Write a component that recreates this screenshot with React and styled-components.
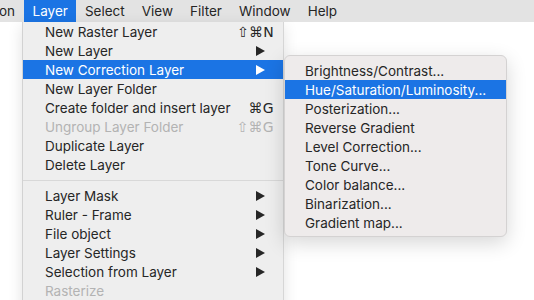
import React from "react";
import styled, { createGlobalStyle } from "styled-components";

const GlobalStyle = createGlobalStyle`
  html, body {
    margin: 0;
    background: #ffffff;
  }
  body {
    font-family: Inter, "Noto Sans", "Liberation Sans", sans-serif;
    font-size: 13.5px;
    color: #262626;
  }
`;

const mainItems = [
  { label: "New Raster Layer", shortcut: "⇧⌘N" },
  { label: "New Layer", sub: true },
  { label: "New Correction Layer", sub: true, active: true },
  { label: "New Layer Folder" },
  { label: "Create folder and insert layer", shortcut: "⌘G" },
  { label: "Ungroup Layer Folder", shortcut: "⇧⌘G", disabled: true },
  { label: "Duplicate Layer" },
  { label: "Delete Layer" },
  { separator: true },
  { label: "Layer Mask", sub: true },
  { label: "Ruler - Frame", sub: true },
  { label: "File object", sub: true },
  { label: "Layer Settings", sub: true },
  { label: "Selection from Layer", sub: true },
  { label: "Rasterize", disabled: true },
];

const correctionItems = [
  "Brightness/Contrast...",
  "Hue/Saturation/Luminosity...",
  "Posterization...",
  "Reverse Gradient",
  "Level Correction...",
  "Tone Curve...",
  "Color balance...",
  "Binarization...",
  "Gradient map...",
];

function App() {
  return (
    <Page>
      <GlobalStyle />
      <MenuBar>
        <BarItem $cut>on</BarItem>
        <BarItem $open>Layer</BarItem>
        <BarItem>Select</BarItem>
        <BarItem>View</BarItem>
        <BarItem>Filter</BarItem>
        <BarItem>Window</BarItem>
        <BarItem>Help</BarItem>
      </MenuBar>
      <Dropdown>
        {mainItems.map((item, index) => {
          if (item.separator) {
            return <Separator key={index} />;
          }
          return (
            <Row key={index} $active={item.active} $disabled={item.disabled}>
              <Label>{item.label}</Label>
              {item.shortcut && <Shortcut>{item.shortcut}</Shortcut>}
              {item.sub && <Arrow />}
              {item.active && (
                <SubMenu>
                  {correctionItems.map((label, i) => (
                    <SubRow key={label} $active={i === 1}>
                      {label}
                    </SubRow>
                  ))}
                </SubMenu>
              )}
            </Row>
          );
        })}
      </Dropdown>
    </Page>
  );
}

const Page = styled.div`
  display: flex;
  flex-direction: column;
  height: 300px;
  overflow: hidden;
`;

const MenuBar = styled.div`
  display: flex;
  align-items: stretch;
  flex: none;
  height: 22px;
  margin-left: -5px;
  background: #e3e3e3;
`;

const BarItem = styled.div`
  display: flex;
  align-items: center;
  padding: ${(p) => (p.$cut ? "0 9px 0 4px" : "0 8.5px")};
  background: ${(p) => (p.$open ? "#1b74e4" : "transparent")};
  color: ${(p) => (p.$open ? "#ffffff" : "#262626")};
  font-size: 13.5px;
`;

const Dropdown = styled.div`
  flex: none;
  width: 260px;
  height: 290px;
  margin-left: 22px;
  background: #eeeeee;
  border-left: 1px solid #d2d2d2;
  border-right: 1px solid #d6d6d6;
  box-shadow: 0 4px 14px rgba(0, 0, 0, 0.12);
`;

const Row = styled.div`
  position: relative;
  display: flex;
  align-items: center;
  height: 19px;
  padding: 0 9px 0 22px;
  background: ${(p) => (p.$active ? "#1b74e4" : "transparent")};
  color: ${(p) =>
    p.$active ? "#ffffff" : p.$disabled ? "#b3b3b3" : "#262626"};
`;

const Label = styled.span`
  flex: 1;
`;

const Shortcut = styled.span`
  font-family: "DejaVu Sans", sans-serif;
  font-size: 14px;
  letter-spacing: 0.3px;
`;

const Arrow = styled.span`
  width: 0;
  height: 0;
  margin-right: 9px;
  border-top: 5px solid transparent;
  border-bottom: 5px solid transparent;
  border-left: 9px solid currentColor;
`;

const Separator = styled.div`
  height: 1px;
  margin: 6px 0 5px;
  background: #d8d8d8;
`;

const SubMenu = styled.div`
  position: absolute;
  top: -5px;
  left: calc(100% + 1px);
  z-index: 2;
  width: 221px;
  padding: 5px 0 4px;
  background: #eeebeb;
  border: 1px solid #d4d2d2;
  border-radius: 6px;
  box-shadow: 0 6px 20px rgba(0, 0, 0, 0.16);
`;

const SubRow = styled.div`
  display: flex;
  align-items: center;
  height: 19px;
  padding-left: 20px;
  background: ${(p) => (p.$active ? "#1b74e4" : "transparent")};
  color: ${(p) => (p.$active ? "#ffffff" : "#262626")};
`;

export default App;
